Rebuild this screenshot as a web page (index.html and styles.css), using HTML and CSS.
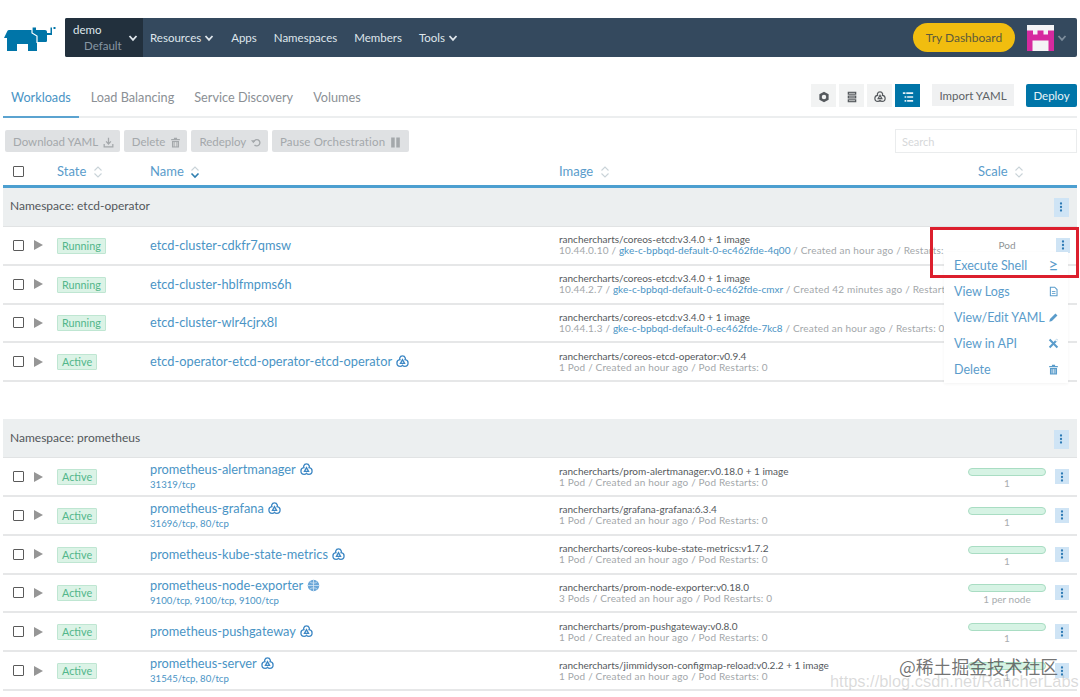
FILE: index.html
```html
<!DOCTYPE html>
<html lang="en">
<head>
    <meta charset="UTF-8">
    <title>Workloads</title>
    <link rel="stylesheet" href="styles.css">
</head>
<body>
    <svg class="sprites" aria-hidden="true">
        <symbol id="i-chev" viewBox="0 0 10 10"><path d="M1.5 3 5 6.8 8.5 3" fill="none" stroke="currentColor" stroke-width="1.8"/></symbol>
        <symbol id="i-kebab" viewBox="0 0 16 16"><circle cx="8" cy="4" r="1.3" fill="currentColor"/><circle cx="8" cy="8" r="1.3" fill="currentColor"/><circle cx="8" cy="12" r="1.3" fill="currentColor"/></symbol>
        <symbol id="i-sort" viewBox="0 0 10 14"><path d="M1.5 5.500 5 2l3.500 3.500M1.500 8.500 5 12l3.500-3.500" fill="none" stroke="#c9d3d8" stroke-width="1.100"/></symbol>
        <symbol id="i-sort-on" viewBox="0 0 10 14"><path d="M1.500 5.500 5 2l3.500 3.500" fill="none" stroke="#c9d3d8" stroke-width="1.100"/><path d="M1.500 8.500 5 12l3.500-3.500" fill="none" stroke="#2f7fb0" stroke-width="1.600"/></symbol>
        <symbol id="i-deploy" viewBox="0 0 14 14"><path d="M7 1c1.600 0 2.600 1 3 2.200.2.800 0 1.400-.2 1.800 1.800.2 3.200 1.600 3.200 3.500 0 2.200-1.600 3.700-3.500 3.700-1 0-1.900-.4-2.500-1.100-.6.700-1.500 1.100-2.500 1.100C2.600 12.200 1 10.700 1 8.500 1 6.600 2.400 5.200 4.200 5 4 4.600 3.800 4 4 3.200 4.400 2 5.400 1 7 1zM7 5 4.800 9h4.400z" fill="none" stroke="currentColor" stroke-width="1.400"/></symbol>
        <symbol id="i-globe" viewBox="0 0 14 14"><circle cx="7" cy="7" r="6.200" fill="#6aa6d8"/><path d="M1 7h12M7 1v12M3 3c2 2 6 2 8 0M3 11c2-2 6-2 8 0" fill="none" stroke="#dcebf7" stroke-width=".8"/></symbol>
        <symbol id="i-gear" viewBox="0 0 14 14"><path d="M7 .8 12.400 3.900v6.200L7 13.200 1.600 10.100V3.900z" fill="currentColor"/><circle cx="7" cy="7" r="2.600" fill="#f2f3f3"/></symbol>
        <symbol id="i-server" viewBox="0 0 14 14"><path d="M2 1h10v3.500H2zM2 5.250h10v3.500H2zM2 9.500h10V13H2z" fill="currentColor"/><path d="M3.500 2.750h7M3.500 7h7M3.500 11.250h7" stroke="#f2f3f3" stroke-width=".8"/></symbol>
        <symbol id="i-list" viewBox="0 0 14 14"><path d="M1 2.500h3M5 2.500h8M3 7h2M6 7h7M3 11.500h2M6 11.500h7" stroke="currentColor" stroke-width="2"/></symbol>
        <symbol id="i-download" viewBox="0 0 14 14"><path d="M7 1v7M4 5.500 7 9l3-3.500M1.500 9v3.500h11V9" fill="none" stroke="currentColor" stroke-width="1.600"/></symbol>
        <symbol id="i-trash" viewBox="0 0 14 14"><path d="M5 1h4v1.500h3.500v1.500h-11V2.500H5zM2.500 5h9v8.500h-9z" fill="currentColor"/><path d="M5 6.500V12M7 6.500V12M9 6.500V12" stroke="#fff" stroke-width=".8"/></symbol>
        <symbol id="i-redo" viewBox="0 0 14 14"><path d="M3.500 6a4 4 0 1 1 1 4.200" fill="none" stroke="currentColor" stroke-width="1.700"/><path d="M0 4.200h6L3 8z" fill="currentColor"/></symbol>
        <symbol id="i-pause" viewBox="0 0 14 14"><path d="M1.500 .5h4.500v13H1.500zM8 .5h4.500v13H8z" fill="currentColor"/></symbol>
        <symbol id="i-file" viewBox="0 0 14 14"><path d="M3 1.500h5.500L11.500 4.500v8H3z" fill="none" stroke="currentColor" stroke-width="1.300"/><path d="M5 7h4.500M5 9.500h4.500" stroke="currentColor" stroke-width="1.100"/></symbol>
        <symbol id="i-pencil" viewBox="0 0 14 14"><path d="M2.500 9 9.500 2l2.500 2.500-7 7-3.300.8z" fill="currentColor"/></symbol>
        <symbol id="i-tools" viewBox="0 0 14 14"><path d="M2 2l10 10M12 2 2 12" stroke="currentColor" stroke-width="2.600"/><circle cx="11" cy="3" r="1.500" fill="#fff"/></symbol>
    </svg>

    <header class="top">
        <svg class="logo" viewBox="0 0 52 24" aria-label="Rancher">
            <path d="M0 11 3.500 3.800C3.800 3.200 4.300 3 5 3h23V.5h4V3h9c1.200 0 2 .8 2 2v1h3.500V.5H48V8h-5v5.500c0 1-.6 1.500-1.500 1.500H33v9h-9v-7H13v7H3V11z" fill="#0075a8"/>
            <path d="M49.500 0h2v2h-2z" fill="#0075a8"/>
            <path d="M28 0v6l5 3v7" fill="none" stroke="#fff" stroke-width="1.200"/>
        </svg>
        <div class="bar">
            <div class="cluster">
                <div class="cluster-name"><span>demo</span><span class="cluster-sub">Default</span></div>
                <svg class="chev"><use href="#i-chev"/></svg>
            </div>
            <nav class="mainnav">
                <a href="#">Resources <svg class="chev"><use href="#i-chev"/></svg></a>
                <a href="#">Apps</a>
                <a href="#">Namespaces</a>
                <a href="#">Members</a>
                <a href="#">Tools <svg class="chev"><use href="#i-chev"/></svg></a>
            </nav>
            <a class="try" href="#">Try Dashboard</a>
            <svg class="avatar" viewBox="0 0 27 26">
                <rect width="27" height="26" fill="#f4f4f6"/>
                <path d="M0 5.500h6v4h4.500v-4h6v4H21v-4h6V26H0z" fill="#d62a9f"/>
                <rect x="5.500" y="15.500" width="16" height="10.500" fill="#f4f4f6"/>
            </svg>
            <svg class="chev chev-light"><use href="#i-chev"/></svg>
        </div>
    </header>

    <div class="tabs">
        <a class="tab active" href="#">Workloads</a>
        <a class="tab" href="#">Load Balancing</a>
        <a class="tab" href="#">Service Discovery</a>
        <a class="tab" href="#">Volumes</a>
        <div class="tab-tools">
            <button class="tool"><svg><use href="#i-gear"/></svg></button>
            <button class="tool"><svg><use href="#i-server"/></svg></button>
            <button class="tool"><svg><use href="#i-deploy"/></svg></button>
            <button class="tool on"><svg><use href="#i-list"/></svg></button>
            <button class="import">Import YAML</button>
            <button class="deploy">Deploy</button>
        </div>
    </div>

    <div class="actions">
        <button class="act">Download YAML <svg><use href="#i-download"/></svg></button>
        <button class="act">Delete <svg><use href="#i-trash"/></svg></button>
        <button class="act">Redeploy <svg><use href="#i-redo"/></svg></button>
        <button class="act">Pause Orchestration <svg><use href="#i-pause"/></svg></button>
        <input class="search" type="text" placeholder="Search">
    </div>

    <div class="table">
        <div class="row head">
            <span class="box"></span>
            <span class="th">State <svg><use href="#i-sort"/></svg></span>
            <span class="th">Name <svg><use href="#i-sort-on"/></svg></span>
            <span class="th">Image <svg><use href="#i-sort"/></svg></span>
            <span class="th">Scale <svg><use href="#i-sort"/></svg></span>
        </div>

        <div class="group">Namespace: etcd-operator <button class="kebab big"><svg><use href="#i-kebab"/></svg></button></div>

        <div class="row">
            <div class="sel"><span class="box"></span><span class="play"></span></div>
            <div><span class="badge">Running</span></div>
            <div class="name"><a href="#">etcd-cluster-cdkfr7qmsw</a></div>
            <div class="image">
                <p>ranchercharts/coreos-etcd:v3.4.0 + 1 image</p>
                <p class="sub">10.44.0.10 / <a href="#">gke-c-bpbqd-default-0-ec462fde-4q00</a> / Created an hour ago / Restarts: 0</p>
            </div>
            <div class="scale"><span class="pod">Pod</span><button class="kebab"><svg><use href="#i-kebab"/></svg></button></div>
        </div>
        <div class="row">
            <div class="sel"><span class="box"></span><span class="play"></span></div>
            <div><span class="badge">Running</span></div>
            <div class="name"><a href="#">etcd-cluster-hblfmpms6h</a></div>
            <div class="image">
                <p>ranchercharts/coreos-etcd:v3.4.0 + 1 image</p>
                <p class="sub">10.44.2.7 / <a href="#">gke-c-bpbqd-default-0-ec462fde-cmxr</a> / Created 42 minutes ago / Restarts: 0</p>
            </div>
        </div>
        <div class="row">
            <div class="sel"><span class="box"></span><span class="play"></span></div>
            <div><span class="badge">Running</span></div>
            <div class="name"><a href="#">etcd-cluster-wlr4cjrx8l</a></div>
            <div class="image">
                <p>ranchercharts/coreos-etcd:v3.4.0 + 1 image</p>
                <p class="sub">10.44.1.3 / <a href="#">gke-c-bpbqd-default-0-ec462fde-7kc8</a> / Created an hour ago / Restarts: 0</p>
            </div>
        </div>
        <div class="row">
            <div class="sel"><span class="box"></span><span class="play"></span></div>
            <div><span class="badge">Active</span></div>
            <div class="name"><a href="#">etcd-operator-etcd-operator-etcd-operator</a> <svg class="kind"><use href="#i-deploy"/></svg></div>
            <div class="image">
                <p>ranchercharts/coreos-etcd-operator:v0.9.4</p>
                <p class="sub">1 Pod / Created an hour ago / Pod Restarts: 0</p>
            </div>
        </div>

        <div class="group group-next">Namespace: prometheus <button class="kebab big"><svg><use href="#i-kebab"/></svg></button></div>

        <div class="row">
            <div class="sel"><span class="box"></span><span class="play"></span></div>
            <div><span class="badge">Active</span></div>
            <div class="name"><a href="#">prometheus-alertmanager</a> <svg class="kind"><use href="#i-deploy"/></svg><p class="ports">31319/tcp</p></div>
            <div class="image">
                <p>ranchercharts/prom-alertmanager:v0.18.0 + 1 image</p>
                <p class="sub">1 Pod / Created an hour ago / Pod Restarts: 0</p>
            </div>
            <div class="scale"><div class="meter"><span class="meter-bar"></span><span class="meter-num">1</span></div><button class="kebab"><svg><use href="#i-kebab"/></svg></button></div>
        </div>
        <div class="row">
            <div class="sel"><span class="box"></span><span class="play"></span></div>
            <div><span class="badge">Active</span></div>
            <div class="name"><a href="#">prometheus-grafana</a> <svg class="kind"><use href="#i-deploy"/></svg><p class="ports">31696/tcp, 80/tcp</p></div>
            <div class="image">
                <p>ranchercharts/grafana-grafana:6.3.4</p>
                <p class="sub">1 Pod / Created an hour ago / Pod Restarts: 0</p>
            </div>
            <div class="scale"><div class="meter"><span class="meter-bar"></span><span class="meter-num">1</span></div><button class="kebab"><svg><use href="#i-kebab"/></svg></button></div>
        </div>
        <div class="row">
            <div class="sel"><span class="box"></span><span class="play"></span></div>
            <div><span class="badge">Active</span></div>
            <div class="name"><a href="#">prometheus-kube-state-metrics</a> <svg class="kind"><use href="#i-deploy"/></svg></div>
            <div class="image">
                <p>ranchercharts/coreos-kube-state-metrics:v1.7.2</p>
                <p class="sub">1 Pod / Created an hour ago / Pod Restarts: 0</p>
            </div>
            <div class="scale"><div class="meter"><span class="meter-bar"></span><span class="meter-num">1</span></div><button class="kebab"><svg><use href="#i-kebab"/></svg></button></div>
        </div>
        <div class="row">
            <div class="sel"><span class="box"></span><span class="play"></span></div>
            <div><span class="badge">Active</span></div>
            <div class="name"><a href="#">prometheus-node-exporter</a> <svg class="kind"><use href="#i-globe"/></svg><p class="ports">9100/tcp, 9100/tcp, 9100/tcp</p></div>
            <div class="image">
                <p>ranchercharts/prom-node-exporter:v0.18.0</p>
                <p class="sub">3 Pods / Created an hour ago / Pod Restarts: 0</p>
            </div>
            <div class="scale"><div class="meter"><span class="meter-bar"></span><span class="meter-num">1 per node</span></div><button class="kebab"><svg><use href="#i-kebab"/></svg></button></div>
        </div>
        <div class="row">
            <div class="sel"><span class="box"></span><span class="play"></span></div>
            <div><span class="badge">Active</span></div>
            <div class="name"><a href="#">prometheus-pushgateway</a> <svg class="kind"><use href="#i-deploy"/></svg></div>
            <div class="image">
                <p>ranchercharts/prom-pushgateway:v0.8.0</p>
                <p class="sub">1 Pod / Created an hour ago / Pod Restarts: 0</p>
            </div>
            <div class="scale"><div class="meter"><span class="meter-bar"></span><span class="meter-num">1</span></div><button class="kebab"><svg><use href="#i-kebab"/></svg></button></div>
        </div>
        <div class="row">
            <div class="sel"><span class="box"></span><span class="play"></span></div>
            <div><span class="badge">Active</span></div>
            <div class="name"><a href="#">prometheus-server</a> <svg class="kind"><use href="#i-deploy"/></svg><p class="ports">31545/tcp, 80/tcp</p></div>
            <div class="image">
                <p>ranchercharts/jimmidyson-configmap-reload:v0.2.2 + 1 image</p>
                <p class="sub">1 Pod / Created an hour ago / Pod Restarts: 0</p>
            </div>
            <div class="scale"><div class="meter"><span class="meter-bar"></span><span class="meter-num">1</span></div><button class="kebab"><svg><use href="#i-kebab"/></svg></button></div>
        </div>
    </div>

    <!-- menu abierto sobre la tabla -->
    <ul class="menu">
        <li><a href="#">Execute Shell</a><span class="menu-glyph">≥</span></li>
        <li><a href="#">View Logs</a><svg><use href="#i-file"/></svg></li>
        <li><a href="#">View/Edit YAML</a><svg><use href="#i-pencil"/></svg></li>
        <li><a href="#">View in API</a><svg><use href="#i-tools"/></svg></li>
        <li><a href="#">Delete</a><svg><use href="#i-trash"/></svg></li>
    </ul>
    <div class="redbox"></div>

    <div class="mark">@稀土掘金技术社区</div>
    <div class="mark-url">https://blog.csdn.net/RancherLabs</div>
</body>
</html>
```

FILE: styles.css
```css
* {
    margin: 0;
    padding: 0;
    box-sizing: border-box;
}

html, body {
    height: 697px;
    overflow: hidden;
}

body {
    position: relative;
    background: #fff;
    color: #4d5257;
    font-family: "Lato", "Noto Sans CJK SC", sans-serif;
    font-size: 13px;
}

a {
    text-decoration: none;
    color: inherit;
}

button {
    border: 0;
    font-family: inherit;
}

.sprites {
    display: none;
}

/* Header */
.top {
    display: flex;
    align-items: center;
    height: 39px;
    margin: 18px 3px 0 4px;
}

.logo {
    flex: none;
    width: 52px;
    height: 24px;
    margin: 3px 9px 0 0;
}

.bar {
    flex: 1;
    display: flex;
    align-items: center;
    height: 39px;
    background: #34495e;
    border-radius: 2px;
    color: #dfe6ec;
}

.chev {
    width: 10px;
    height: 10px;
    vertical-align: -1px;
}

.chev-light {
    margin: 0 10px 0 3px;
    color: #7d8d9c;
}

.cluster {
    display: flex;
    align-items: center;
    justify-content: space-between;
    width: 78px;
    height: 39px;
    padding: 0 5px 0 8px;
    background: #22303d;
    border-radius: 2px 0 0 2px;
}

.cluster-name {
    display: flex;
    flex-direction: column;
    font-size: 11.5px;
    line-height: 16px;
}

.cluster-sub {
    padding-left: 11px;
    color: #8796a3;
}

.mainnav {
    flex: 1;
    display: flex;
    gap: 17px;
    padding-left: 7px;
    font-size: 11.5px;
}

.try {
    width: 102px;
    height: 29px;
    margin-right: 12px;
    border-radius: 15px;
    background: #f1bd0f;
    color: #5c5a3c;
    font-size: 12px;
    line-height: 29px;
    text-align: center;
}

.avatar {
    width: 27px;
    height: 26px;
}

/* Tabs */
.tabs {
    display: flex;
    align-items: center;
    height: 42px;
    margin: 19px 3px 0;
    padding-left: 8px;
    border-bottom: 2px solid #eceeef;
    font-size: 12.7px;
    color: #8b9095;
}

.tab {
    margin-right: 20px;
    padding-top: 1px;
    line-height: 40px;
}

.tab.active {
    position: relative;
    color: #4a94c5;
}

.tab.active::after {
    content: "";
    position: absolute;
    left: -8px;
    right: -8px;
    bottom: -1px;
    height: 2px;
    background: #5ba3d0;
}

.tab-tools {
    margin-left: auto;
    display: flex;
    align-items: center;
    gap: 3px;
    margin-bottom: 2px;
}

.tool {
    width: 25px;
    height: 23px;
    background: #f2f3f3;
    color: #55595d;
}

.tool svg {
    width: 12px;
    height: 12px;
    vertical-align: middle;
}

.tool.on {
    background: #0075a8;
    color: #e6f2f8;
}

.import {
    width: 82px;
    height: 22px;
    margin: 0 9px;
    background: #f0f1f2;
    color: #5d6266;
    font-size: 11.5px;
}

.deploy {
    width: 51px;
    height: 23px;
    background: #0075a8;
    color: #e8f3f8;
    border-radius: 2px;
    font-size: 11.5px;
}

/* Barra de acciones */
.actions {
    display: flex;
    align-items: center;
    gap: 4px;
    height: 24px;
    margin: 11px 3px 0 5px;
}

.act {
    height: 22px;
    padding: 0 6px 0 8px;
    background: #dfe1e3;
    color: #a4a8ab;
    border-radius: 2px;
    font-size: 11.5px;
}

.act svg {
    width: 11px;
    height: 11px;
    margin-left: 2px;
    vertical-align: -2px;
}

.act:last-of-type {
    padding-right: 8px;
    letter-spacing: .15px;
}

.search {
    width: 182px;
    height: 24px;
    margin-left: auto;
    padding-left: 6px;
    border: 1px solid #eaeced;
    font-family: inherit;
    font-size: 11px;
}

.search::placeholder {
    color: #d6d8da;
}

/* Tabla */
.table {
    margin: 0 3px;
}

.row {
    display: grid;
    grid-template-columns: 54px 93px 409px 409px 1fr;
    align-items: center;
    height: 38.8px;
    border-bottom: 2px solid #e6e7e8;
}

.row.head {
    height: 33px;
    margin-top: 2px;
    padding: 2px 0 0 10px;
    grid-template-columns: 44px 93px 409px 419px 1fr;
    border-bottom: 3px solid #4c9fd0;
}

.th {
    color: #5a9ccb;
    font-size: 13px;
}

.th svg {
    width: 10px;
    height: 14px;
    margin-left: 3px;
    vertical-align: -3px;
}

.box {
    display: block;
    width: 11px;
    height: 11px;
    border: 1.5px solid #5a5a5a;
    border-radius: 1px;
    background: #fff;
}

.sel {
    display: flex;
    align-items: center;
    gap: 10px;
    padding-left: 10px;
}

.play {
    width: 0;
    height: 0;
    border-left: 9px solid #969696;
    border-top: 5px solid transparent;
    border-bottom: 5px solid transparent;
}

.badge {
    display: inline-block;
    height: 16px;
    padding: 0 4px;
    background: #dbf3e6;
    border: 1px solid #bfe6d2;
    border-radius: 1px;
    color: #52b68a;
    font-size: 10.8px;
    line-height: 14px;
}

.name {
    color: #4a94c5;
    font-size: 12.8px;
    line-height: 15px;
}

.kind {
    width: 13px;
    height: 13px;
    margin-left: 1px;
    vertical-align: -2px;
    color: #3d87c4;
}

.ports {
    margin-top: 2px;
    font-size: 9.6px;
    line-height: 12px;
}

.image {
    max-width: 385px;
    font-size: 10px;
    line-height: 11px;
    color: #55595d;
    white-space: nowrap;
    overflow: hidden;
}

.sub {
    color: #a3a7aa;
    letter-spacing: .2px;
}

.sub a {
    color: #4a94c5;
    letter-spacing: 0;
}

.scale {
    display: flex;
    align-items: center;
    justify-content: flex-end;
    padding-right: 8px;
}

.pod {
    width: 78px;
    margin-right: 10px;
    color: #8f9396;
    font-size: 10px;
    text-align: center;
}

.meter {
    width: 78px;
    margin-right: 9px;
    color: #a9adb0;
    font-size: 10px;
    line-height: 12px;
    text-align: center;
}

.meter-bar {
    display: block;
    height: 8px;
    margin: 4px 0 1px;
    background: #d6f3e4;
    border: 1px solid #a9ddc3;
    border-radius: 4px;
}

.kebab {
    width: 14px;
    height: 15px;
    background: #cfe4f5;
    color: #2d7ab5;
}

.kebab svg {
    display: block;
    width: 14px;
    height: 14px;
}

.kebab.big {
    width: 15px;
    height: 19px;
    margin-top: 3px;
}

.group {
    display: flex;
    align-items: center;
    justify-content: space-between;
    height: 39px;
    padding: 0 8px 3px 7px;
    background: #ecefF0;
    border-bottom: 1px solid #e1e3e4;
    color: #53575b;
    font-size: 12px;
}

.group-next {
    margin-top: 37px;
    padding-bottom: 1px;
}

/* Menu desplegable */
.menu {
    position: absolute;
    left: 944px;
    top: 252px;
    width: 124px;
    height: 131px;
    background: #fff;
    list-style: none;
    color: #5a9ccb;
    box-shadow: 0 1px 3px rgba(0, 0, 0, 0.05);
}

.menu li {
    display: flex;
    align-items: center;
    justify-content: space-between;
    height: 26px;
    padding: 0 9px 0 10px;
    font-size: 12.5px;
}

.menu svg {
    width: 11px;
    height: 11px;
}

.menu-glyph {
    width: 11px;
    font-size: 17px;
    line-height: 20px;
    text-align: center;
}

.redbox {
    position: absolute;
    left: 930px;
    top: 227px;
    width: 149px;
    height: 51px;
    border: 3px solid #dc1f2d;
}

/* Marca de agua */
.mark {
    position: absolute;
    left: 899px;
    top: 654px;
    color: rgba(70, 70, 70, 0.75);
    font-family: "Noto Sans CJK SC", sans-serif;
    font-size: 17.8px;
    line-height: 25px;
}

.mark-url {
    position: absolute;
    left: 830px;
    top: 671px;
    color: rgba(150, 150, 150, 0.35);
    font-family: "Liberation Sans", sans-serif;
    font-size: 16.4px;
    line-height: 20px;
}
```
